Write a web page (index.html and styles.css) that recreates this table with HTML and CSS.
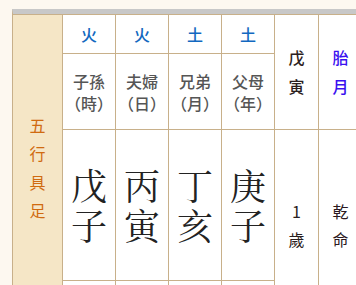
FILE: index.html
```html
<!DOCTYPE html>
<html lang="zh-Hant">
<head>
<meta charset="utf-8">
<link rel="stylesheet" href="styles.css">
</head>
<body>
<div class="wrap">
  <div class="chart">
    <div class="cell side">五<br>行<br>具<br>足</div>

    <div class="cell elem c2">火</div>
    <div class="cell elem c3">火</div>
    <div class="cell elem c4">土</div>
    <div class="cell elem c5">土</div>

    <div class="cell tall c6 dark">戊<br>寅</div>
    <div class="cell tall c7 blue">胎<br>月</div>

    <div class="cell rel c2">子孫<br>（時）</div>
    <div class="cell rel c3">夫婦<br>（日）</div>
    <div class="cell rel c4">兄弟<br>（月）</div>
    <div class="cell rel c5">父母<br>（年）</div>

    <div class="cell big c2">戊<br>子</div>
    <div class="cell big c3">丙<br>寅</div>
    <div class="cell big c4">丁<br>亥</div>
    <div class="cell big c5">庚<br>子</div>

    <div class="cell low c6 dark">1<br>歲</div>
    <div class="cell low c7 dark2">乾<br>命</div>

    <div class="cell foot c2"></div>
    <div class="cell foot c3"></div>
    <div class="cell foot c4"></div>
    <div class="cell foot c5"></div>
  </div>
</div>
</body>
</html>
```

FILE: styles.css
```css
html, body {
  margin: 0;
  padding: 0;
  overflow: hidden;
  background: #fdf8f0;
}

.wrap {
  padding: 9px 0 0 12px;
}

.chart {
  display: grid;
  grid-template-columns: 49px 52px 52px 52px 52px 43px 43px;
  grid-template-rows: 38px 75px 150px 39px;
  gap: 1px;
  width: max-content;
  background: #c8b08a;
  border: 1px solid #c8b08a;
  border-top: 5px solid #c8c8c8;
  padding-top: 1px;
  font-family: "Noto Sans CJK TC", "Noto Sans", sans-serif;
}

.cell {
  background: #fff;
  display: flex;
  align-items: center;
  justify-content: center;
  text-align: center;
}

.c2 { grid-column: 2; }
.c3 { grid-column: 3; }
.c4 { grid-column: 4; }
.c5 { grid-column: 5; }
.c6 { grid-column: 6; }
.c7 { grid-column: 7; }

.side {
  grid-column: 1;
  grid-row: 1 / span 4;
  background: #f5e6c6;
  color: #d06a10;
  font-size: 16px;
  line-height: 28.5px;
}

.elem {
  grid-row: 1;
  color: #1268c0;
  font-size: 16px;
  font-weight: 500;
}

.rel {
  grid-row: 2;
  color: #555;
  font-size: 16px;
  font-weight: 500;
  line-height: 22px;
}

.big {
  grid-row: 3;
  color: #222;
  font-family: "Noto Serif CJK TC", "Noto Serif CJK SC", "Noto Sans CJK TC", serif;
  font-size: 36px;
  line-height: 40px;
}

.foot {
  grid-row: 4;
}

.tall {
  grid-row: 1 / span 2;
  font-size: 16px;
  font-weight: 500;
  line-height: 29px;
}

.low {
  grid-row: 3 / span 2;
  font-size: 16px;
  line-height: 28.5px;
}

.dark { color: #2a2020; }
.dark2 { color: #2a1820; }
.blue { color: #3a10f0; }
```
